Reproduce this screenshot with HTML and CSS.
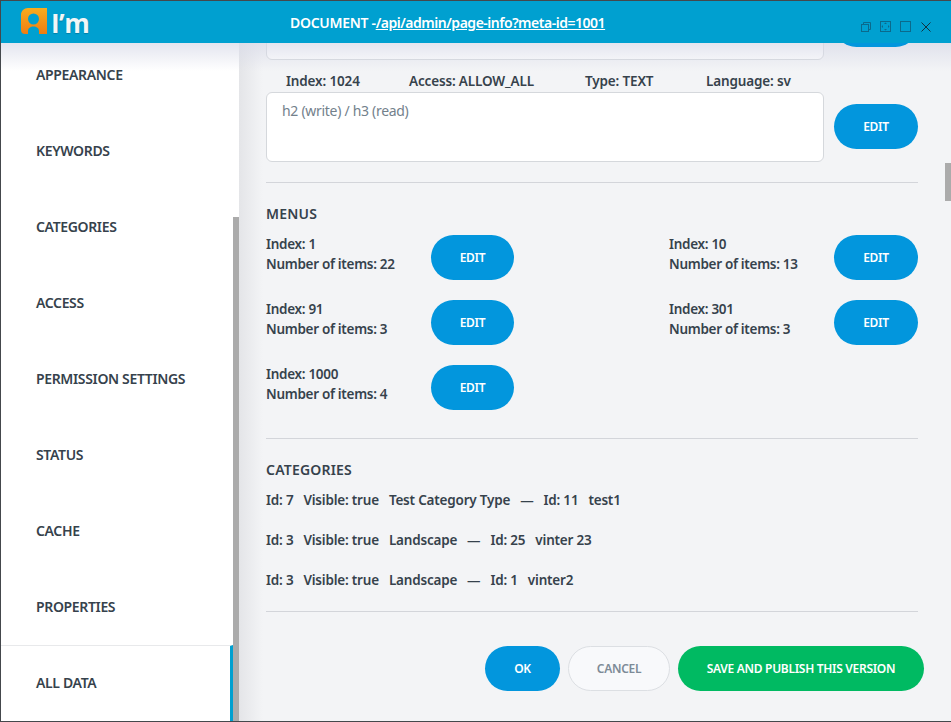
FILE: index.html
```html
<!DOCTYPE html>
<html lang="en">
<head>
    <meta charset="UTF-8">
    <title>Document info</title>
    <link rel="stylesheet" href="styles.css">
</head>
<body>
    <div class="window">
        <header class="top-bar">
            <div class="logo">
                <svg class="logo-mark" width="26" height="26" viewBox="0 0 26 26">
                    <defs>
                        <linearGradient id="logoFill" x1="0" y1="0" x2="0" y2="1">
                            <stop offset="0" stop-color="#f9ac1e"/>
                            <stop offset="1" stop-color="#ee7d12"/>
                        </linearGradient>
                    </defs>
                    <path fill="url(#logoFill)" fill-rule="evenodd" d="M7 0H26V26H18V23C18 20 15.500 18.500 12.500 18.500C9.500 18.500 7 20 7 23V26H4C1.500 26 0 24.500 0 22V7C0 3 3 0 7 0ZM12.500 5.500A5.500 5.500 0 1 0 12.500 16.500A5.500 5.500 0 1 0 12.500 5.500Z"/>
                </svg>
                <span class="logo-text">I’m</span>
            </div>
            <div class="doc-title">DOCUMENT -<a href="#">/api/admin/page-info?meta-id=1001</a></div>
            <div class="window-icons">
                <svg width="10" height="10" viewBox="0 0 10 10" fill="none" stroke="#0b6a8c"><path d="M2.500 2.500V.5H9.500V7.500H7.500"/><rect x=".5" y="2.500" width="7" height="7"/></svg>
                <svg width="11" height="11" viewBox="0 0 11 11" fill="none" stroke="#0b6a8c"><rect x=".5" y=".5" width="10" height="10"/><path d="M5.500 1.500L7 3H4ZM5.500 9.500L7 8H4ZM1.500 5.500L3 4V7ZM9.500 5.500L8 4V7Z" fill="#0b6a8c" stroke="none"/></svg>
                <svg width="11" height="11" viewBox="0 0 11 11" fill="none" stroke="#0b6a8c"><rect x=".5" y=".5" width="10" height="10"/></svg>
                <svg class="icon-close" width="10" height="10" viewBox="0 0 10 10" fill="none" stroke="#12333f"><path d="M.5 .5L9.500 9.500M9.500 .5L.5 9.500"/></svg>
            </div>
        </header>

        <div class="layout">
            <nav class="sidebar">
                <a class="nav-item" href="#">APPEARANCE</a>
                <a class="nav-item" href="#">KEYWORDS</a>
                <a class="nav-item" href="#">CATEGORIES</a>
                <a class="nav-item" href="#">ACCESS</a>
                <a class="nav-item" href="#">PERMISSION SETTINGS</a>
                <a class="nav-item" href="#">STATUS</a>
                <a class="nav-item" href="#">CACHE</a>
                <a class="nav-item" href="#">PROPERTIES</a>
                <a class="nav-item active" href="#">ALL DATA</a>
                <div class="side-thumb"></div>
            </nav>

            <main class="content">
                <div class="text-row scrolled-row">
                    <div class="text-box"></div>
                    <button class="btn btn-blue btn-edit" aria-label="Edit"></button>
                </div>

                <div class="text-meta">
                    <span>Index: 1024</span>
                    <span>Access: ALLOW_ALL</span>
                    <span>Type: TEXT</span>
                    <span>Language: sv</span>
                </div>
                <div class="text-row">
                    <div class="text-box">h2 (write) / h3 (read)</div>
                    <button class="btn btn-blue btn-edit">EDIT</button>
                </div>

                <hr class="divider divider-text">

                <h2 class="section-title">MENUS</h2>
                <div class="menu-grid">
                    <div class="menu-item">
                        <div class="menu-info">Index: 1<br>Number of items: 22</div>
                        <button class="btn btn-blue btn-menu">EDIT</button>
                    </div>
                    <div class="menu-item">
                        <div class="menu-info">Index: 10<br>Number of items: 13</div>
                        <button class="btn btn-blue btn-menu">EDIT</button>
                    </div>
                    <div class="menu-item">
                        <div class="menu-info">Index: 91<br>Number of items: 3</div>
                        <button class="btn btn-blue btn-menu">EDIT</button>
                    </div>
                    <div class="menu-item">
                        <div class="menu-info">Index: 301<br>Number of items: 3</div>
                        <button class="btn btn-blue btn-menu">EDIT</button>
                    </div>
                    <div class="menu-item">
                        <div class="menu-info">Index: 1000<br>Number of items: 4</div>
                        <button class="btn btn-blue btn-menu">EDIT</button>
                    </div>
                </div>

                <hr class="divider divider-menus">

                <h2 class="section-title">CATEGORIES</h2>
                <div class="category-row">
                    <span>Id: 7</span><span>Visible: true</span><span>Test Category Type</span><span>—</span><span>Id: 11</span><span>test1</span>
                </div>
                <div class="category-row">
                    <span>Id: 3</span><span>Visible: true</span><span>Landscape</span><span>—</span><span>Id: 25</span><span>vinter 23</span>
                </div>
                <div class="category-row">
                    <span>Id: 3</span><span>Visible: true</span><span>Landscape</span><span>—</span><span>Id: 1</span><span>vinter2</span>
                </div>

                <hr class="divider divider-cats">

                <div class="footer-buttons">
                    <button class="btn btn-blue btn-ok">OK</button>
                    <button class="btn btn-cancel">CANCEL</button>
                    <button class="btn btn-green">SAVE AND PUBLISH THIS VERSION</button>
                </div>
                <div class="main-thumb"></div>
            </main>
            <div class="top-shade"></div>
        </div>
    </div>
</body>
</html>
```

FILE: styles.css
```css
* {
    box-sizing: border-box;
}

body {
    margin: 0;
    font-family: "Noto Sans", "Open Sans", sans-serif;
    color: #36424c;
    background-color: #f3f4f6;
}

.window {
    width: 951px;
    height: 722px;
    display: flex;
    flex-direction: column;
    border-top: 1px solid #44484c;
    border-left: 1px solid #44484c;
    border-bottom: 1px solid #44484c;
    overflow: hidden;
}

.top-bar {
    height: 42px;
    flex: none;
    display: flex;
    align-items: center;
    background-color: #00a0d0;
    position: relative;
    z-index: 3;
}

.logo {
    width: 289px;
    padding-left: 20px;
    padding-bottom: 2px;
    display: flex;
    align-items: center;
}

.logo-text {
    margin-left: 4px;
    margin-top: 4px;
    font-family: "Open Sans", sans-serif;
    font-size: 26px;
    font-weight: 700;
    line-height: 26px;
    letter-spacing: -0.5px;
    color: #f2f6f7;
    text-shadow: 0 1px 1px rgba(0, 0, 0, 0.2);
}

.doc-title {
    font-size: 14px;
    font-weight: 600;
    letter-spacing: -0.3px;
    color: #fff;
}

.doc-title a {
    color: #fff;
    letter-spacing: -0.48px;
}

.window-icons {
    margin-left: auto;
    margin-right: 20px;
    margin-top: 9px;
    display: flex;
    align-items: center;
    gap: 9px;
}

.icon-close {
    margin-left: 1px;
}

.layout {
    flex: 1;
    min-height: 0;
    display: flex;
    position: relative;
}

.sidebar {
    width: 238px;
    flex: none;
    background-color: #fff;
    position: relative;
    display: flex;
    flex-direction: column;
    overflow: hidden;
}

.nav-item {
    height: 76px;
    flex: none;
    display: flex;
    align-items: center;
    padding-left: 35px;
    padding-bottom: 2px;
    font-size: 14px;
    font-weight: 600;
    letter-spacing: -0.35px;
    color: #36424c;
    text-decoration: none;
}

.nav-item:first-child {
    margin-top: -6px;
}

.nav-item.active {
    border-top: 1px solid #e8e9eb;
    border-right: 3px solid #00a0d0;
    margin-right: 6px;
}

.side-thumb {
    position: absolute;
    right: 0;
    top: 174px;
    bottom: 0;
    width: 6px;
    background-color: #ababab;
}

.content {
    flex: 1;
    min-width: 0;
    padding: 0 33px 0 27px;
    position: relative;
    overflow: hidden;
    background-color: #f3f4f6;
    background-image: linear-gradient(to right, #e4e5e8, #f3f4f6 24px);
    font-size: 13.5px;
    font-weight: 600;
    letter-spacing: -0.3px;
}

.text-row {
    display: flex;
    align-items: flex-start;
    gap: 10px;
}

.text-box {
    width: 558px;
    height: 70px;
    padding: 8px 15px;
    background-color: #fff;
    border: 1px solid #d5d8dc;
    border-radius: 6px;
    font-size: 14px;
    font-weight: 400;
    color: #73818c;
}

.scrolled-row {
    margin-top: -53px;
}

.scrolled-row .btn {
    position: relative;
    z-index: 2;
}

.btn {
    height: 45px;
    border: none;
    border-radius: 23px;
    font-family: inherit;
    font-size: 12px;
    font-weight: 600;
    letter-spacing: -0.3px;
    color: #fff;
    cursor: pointer;
}

.btn-blue {
    background-color: #0296dd;
}

.btn-edit {
    width: 84px;
    margin-top: 12px;
}

.text-meta {
    height: 32px;
    padding: 10px 0 0 20px;
    display: flex;
    align-items: center;
    letter-spacing: -0.15px;
}

.text-meta span:nth-child(1) {
    width: 123px;
}

.text-meta span:nth-child(2) {
    width: 176px;
}

.text-meta span:nth-child(3) {
    width: 121px;
}

.divider {
    margin: 0;
    border: none;
    height: 1px;
    background-color: #d3d5da;
}

.divider-text {
    margin-top: 20px;
}

.section-title {
    margin: 0;
    font-size: 14px;
    font-weight: 600;
    line-height: 20px;
    letter-spacing: 0.2px;
}

.divider-text + .section-title {
    margin-top: 21px;
}

.menu-grid {
    margin-top: 11px;
    display: grid;
    grid-template-columns: 403px 1fr;
    row-gap: 20px;
}

.menu-item {
    display: flex;
    align-items: flex-start;
    height: 45px;
}

.menu-info {
    width: 165px;
    margin-top: -1px;
    line-height: 20px;
}

.btn-menu {
    width: 83px;
}

.menu-item:nth-child(even) .btn-menu {
    width: 84px;
}

.divider-menus {
    margin-top: 28px;
}

.divider-menus + .section-title {
    margin-top: 21px;
}

.category-row {
    height: 20px;
    margin-top: 20px;
    display: flex;
    align-items: center;
    gap: 10px;
    letter-spacing: -0.2px;
}

.section-title + .category-row {
    margin-top: 10px;
}

.divider-cats {
    margin-top: 21px;
}

.footer-buttons {
    margin-top: 34px;
    margin-right: -6px;
    display: flex;
    justify-content: flex-end;
    gap: 8px;
}

.btn-ok {
    width: 75px;
}

.btn-cancel {
    width: 102px;
    background-color: #f8f9fb;
    border: 1px solid #dcdfe3;
    color: #7d8b97;
}

.btn-green {
    width: 246px;
    background-color: #00ba62;
}

.main-thumb {
    position: absolute;
    top: 120px;
    right: 0;
    width: 6px;
    height: 38px;
    background-color: #ababab;
}

.top-shade {
    position: absolute;
    top: 0;
    left: 0;
    right: 0;
    height: 28px;
    z-index: 1;
    background-image: linear-gradient(to bottom, rgba(216, 218, 232, 0.7), rgba(216, 218, 232, 0));
    pointer-events: none;
}
```
